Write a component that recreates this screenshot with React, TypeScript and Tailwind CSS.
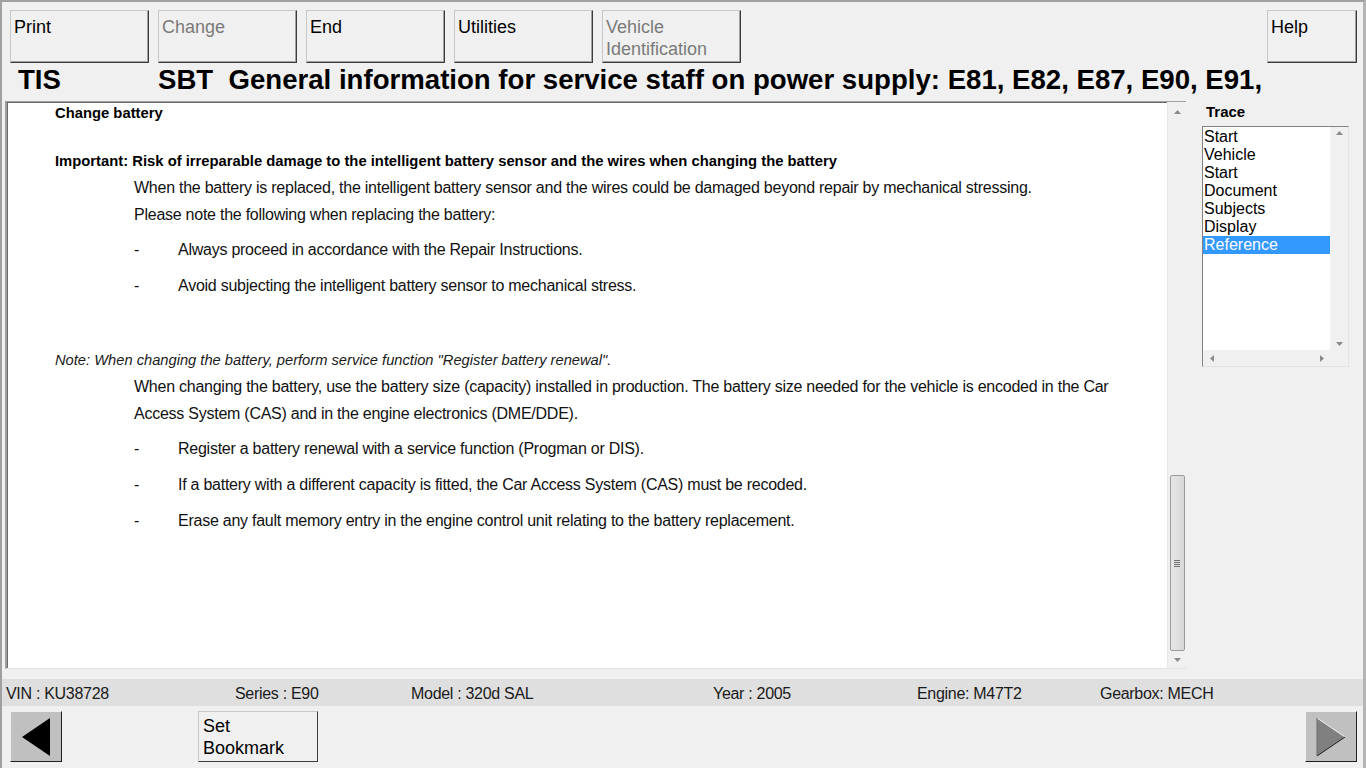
import React from 'react'

const font = { fontFamily: '"Liberation Sans", Arial, sans-serif' }

function ToolButton({ label, disabled }: { label: React.ReactNode; disabled?: boolean }) {
  return (
    <div
      className={
        'w-[139px] h-[53px] shrink-0 bg-[#f0f0f0] border border-t-[#c8c8c8] border-l-[#c8c8c8] border-r-[#3c3c3c] border-b-[#3c3c3c] shadow-[inset_-1px_-1px_0_#a0a0a0] px-[3px] pt-[5px] text-[18px] leading-[22px] ' +
        (disabled ? 'text-[#7a7a7a]' : 'text-black')
      }
    >
      {label}
    </div>
  )
}

function UpArrow() {
  return (
    <svg width="7" height="4" viewBox="0 0 7 4">
      <path d="M0 4 L3.5 0 L7 4 Z" fill="#8a8a8a" />
    </svg>
  )
}
function DownArrow() {
  return (
    <svg width="7" height="4" viewBox="0 0 7 4">
      <path d="M0 0 L3.5 4 L7 0 Z" fill="#8a8a8a" />
    </svg>
  )
}

type Line = { mt: number; text: string; kind: 'h' | 'p' | 'b' | 'n' }

const lines: Line[] = [
  { mt: 0, kind: 'h', text: 'Change battery' },
  { mt: 28, kind: 'h', text: 'Important: Risk of irreparable damage to the intelligent battery sensor and the wires when changing the battery' },
  { mt: 7, kind: 'p', text: 'When the battery is replaced, the intelligent battery sensor and the wires could be damaged beyond repair by mechanical stressing.' },
  { mt: 7, kind: 'p', text: 'Please note the following when replacing the battery:' },
  { mt: 15, kind: 'b', text: 'Always proceed in accordance with the Repair Instructions.' },
  { mt: 16, kind: 'b', text: 'Avoid subjecting the intelligent battery sensor to mechanical stress.' },
  { mt: 54, kind: 'n', text: 'Note: When changing the battery, perform service function "Register battery renewal".' },
  { mt: 7, kind: 'p', text: 'When changing the battery, use the battery size (capacity) installed in production. The battery size needed for the vehicle is encoded in the Car' },
  { mt: 7, kind: 'p', text: 'Access System (CAS) and in the engine electronics (DME/DDE).' },
  { mt: 15, kind: 'b', text: 'Register a battery renewal with a service function (Progman or DIS).' },
  { mt: 16, kind: 'b', text: 'If a battery with a different capacity is fitted, the Car Access System (CAS) must be recoded.' },
  { mt: 16, kind: 'b', text: 'Erase any fault memory entry in the engine control unit relating to the battery replacement.' },
]

function ContentLine({ line }: { line: Line }) {
  const style = { marginTop: line.mt }
  if (line.kind === 'h')
    return (
      <div style={style} className="h-[20px] leading-[20px] pl-[47px] text-[14.8px] font-bold whitespace-nowrap">
        {line.text}
      </div>
    )
  if (line.kind === 'n')
    return (
      <div style={style} className="h-[20px] leading-[20px] pl-[47px] text-[14.7px] italic text-[#1a1a1a] whitespace-nowrap">
        {line.text}
      </div>
    )
  if (line.kind === 'p')
    return (
      <div style={style} className="h-[20px] leading-[20px] pl-[126px] text-[16px] tracking-[-0.25px] text-[#111] whitespace-nowrap">
        {line.text}
      </div>
    )
  return (
    <div style={style} className="h-[20px] leading-[20px] pl-[126px] text-[16px] tracking-[-0.25px] text-[#111] whitespace-nowrap flex">
      <span className="w-[44px]">-</span>
      <span>{line.text}</span>
    </div>
  )
}

const trace = ['Start', 'Vehicle', 'Start', 'Document', 'Subjects', 'Display', 'Reference']

export default function App() {
  return (
    <div style={font} className="w-[1366px] h-[768px] bg-[#f0f0f0] border-t-2 border-l-2 border-r-[3px] border-t-[#a0a0a0] border-l-[#a0a0a0] border-r-[#b4b4b4] overflow-hidden flex flex-col text-black">
      {/* toolbar */}
      <div className="h-[62px] shrink-0 flex gap-[9px] pt-[8px] pl-[8px] pr-[6px]">
        <ToolButton label="Print" />
        <ToolButton label="Change" disabled />
        <ToolButton label="End" />
        <ToolButton label="Utilities" />
        <ToolButton
          disabled
          label={
            <>
              Vehicle
              <br />
              Identification
            </>
          }
        />
        <div className="ml-auto w-[90px] h-[53px] bg-[#f0f0f0] border border-t-[#c8c8c8] border-l-[#c8c8c8] border-r-[#3c3c3c] border-b-[#3c3c3c] shadow-[inset_-1px_-1px_0_#a0a0a0] px-[3px] pt-[5px] text-[18px] leading-[22px]">
          Help
        </div>
      </div>

      {/* title */}
      <div className="h-[37px] shrink-0 flex items-center pb-[6px] text-[27.6px] font-bold whitespace-nowrap">
        <span className="pl-[16px] w-[156px]">TIS</span>
        <span>SBT&nbsp;&nbsp;General information for service staff on power supply: E81, E82, E87, E90, E91,</span>
      </div>

      {/* main */}
      <div className="h-[568px] shrink-0 flex">
        <div className="ml-[3px] w-[1181px] flex border-t border-l-2 border-t-[#a0a0a0] border-l-[#a0a0a0] border-b border-b-[#e3e3e3] bg-white">
          <div className="flex-1 border-t border-l border-t-[#696969] border-l-[#696969]">
            {lines.map((l, i) => (
              <ContentLine key={i} line={l} />
            ))}
          </div>
          <div className="w-[19px] bg-[#f0f0f0] flex flex-col items-center border-l border-l-[#e8e8e8]">
            <div className="h-[17px] flex items-center justify-center pt-[2px]">
              <UpArrow />
            </div>
            <div className="flex-1 w-full" />
            <div className="w-[15px] h-[176px] rounded-[2px] border border-[#9a9a9a] bg-[linear-gradient(to_right,#e6e6e6,#d8d8d8)] flex items-center justify-center">
              <div className="flex flex-col gap-[1px]">
                <div className="w-[6px] h-[1px] bg-[#707070]" />
                <div className="w-[6px] h-[1px] bg-[#707070]" />
                <div className="w-[6px] h-[1px] bg-[#707070]" />
                <div className="w-[6px] h-[1px] bg-[#707070]" />
              </div>
            </div>
            <div className="h-[17px] flex items-center justify-center">
              <DownArrow />
            </div>
          </div>
        </div>

        {/* trace */}
        <div className="flex-1 pl-[16px]">
          <div className="h-[25px] pl-[4px] pt-[1px] text-[15px] font-bold leading-[20px]">Trace</div>
          <div className="w-[147px] h-[241px] border border-t-[#828282] border-l-[#828282] border-r-[#e3e3e3] border-b-[#e3e3e3] bg-white flex flex-col">
            <div className="flex flex-1">
              <div className="w-[127px] pt-[1px]">
                {trace.map((t, i) => (
                  <div
                    key={i}
                    className={
                      'h-[18px] leading-[18px] text-[16px] pl-[1px] ' +
                      (i === trace.length - 1 ? 'bg-[#3399ff] text-white' : 'text-black')
                    }
                  >
                    {t}
                  </div>
                ))}
              </div>
              <div className="w-[18px] bg-[#f0f0f0] flex flex-col items-center justify-between py-[4px]">
                <UpArrow />
                <DownArrow />
              </div>
            </div>
            <div className="h-[16px] bg-[#f0f0f0] flex items-center justify-between pl-[7px] pr-[24px]">
              <svg width="4" height="7" viewBox="0 0 4 7">
                <path d="M4 0 L0 3.5 L4 7 Z" fill="#8a8a8a" />
              </svg>
              <svg width="4" height="7" viewBox="0 0 4 7">
                <path d="M0 0 L4 3.5 L0 7 Z" fill="#8a8a8a" />
              </svg>
            </div>
          </div>
        </div>
      </div>

      {/* status */}
      <div className="mt-[10px] h-[27px] shrink-0 bg-[#dfdfdf] flex items-center pt-[3px] text-[16px] text-[#1a1a1a] tracking-[-0.3px] whitespace-nowrap">
        <span className="pl-[4px] w-[233px]">VIN : KU38728</span>
        <span className="w-[176px]">Series : E90</span>
        <span className="w-[302px]">Model : 320d SAL</span>
        <span className="w-[204px]">Year : 2005</span>
        <span className="w-[183px]">Engine: M47T2</span>
        <span>Gearbox: MECH</span>
      </div>

      {/* bottom nav */}
      <div className="flex-1 flex items-start pt-[5px] pl-[8px] pr-[6px]">
        <div className="w-[52px] h-[51px] bg-[#c0c0c0] border border-t-[#f0f0f0] border-l-[#f0f0f0] border-r-[#202020] border-b-[#202020] flex items-center justify-center">
          <svg width="32" height="40" viewBox="0 0 32 40">
            <path d="M30 1 L2 20 L30 39 Z" fill="#000" />
          </svg>
        </div>
        <div className="ml-[136px] w-[120px] h-[51px] bg-[#f0f0f0] border border-t-[#c8c8c8] border-l-[#c8c8c8] border-r-[#3c3c3c] border-b-[#3c3c3c] px-[4px] pt-[3px] text-[18px] leading-[22px]">
          Set
          <br />
          Bookmark
        </div>
        <div className="ml-auto w-[52px] h-[51px] bg-[#c0c0c0] border border-t-[#f0f0f0] border-l-[#f0f0f0] border-r-[#202020] border-b-[#202020] flex items-center justify-center">
          <svg width="32" height="40" viewBox="0 0 32 40">
            <path d="M2 1 L30 20 L2 39 Z" fill="#808080" />
            <path d="M2 1 L30 20" stroke="#f4f4f4" strokeWidth="1" />
            <path d="M2 39 L30 20" stroke="#202020" strokeWidth="1" />
            <path d="M2 1 L2 39" stroke="#6a6a6a" strokeWidth="1" />
          </svg>
        </div>
      </div>
    </div>
  )
}
